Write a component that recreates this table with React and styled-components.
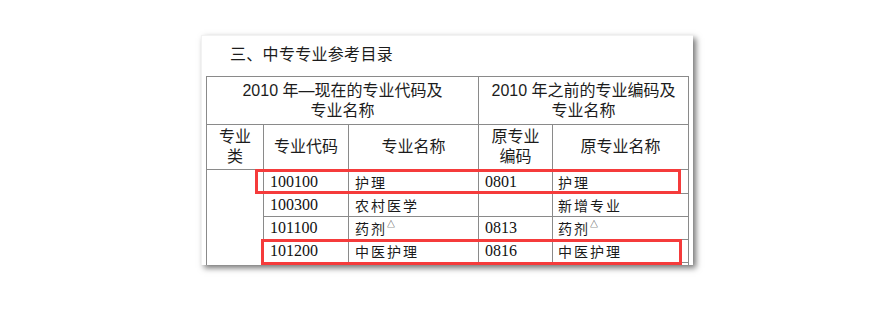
import styled, { createGlobalStyle } from "styled-components";

const GlobalStyle = createGlobalStyle`
  html, body {
    margin: 0;
    padding: 0;
    background: #ffffff;
  }
  body {
    font-family: "Liberation Sans", "Noto Sans CJK SC", sans-serif;
  }
`;

const rows = [
  { code: "100100", name: "护理", oldCode: "0801", oldName: "护理" },
  { code: "100300", name: "农村医学", oldCode: "", oldName: "新增专业" },
  { code: "101100", name: "药剂", mark: true, oldCode: "0813", oldName: "药剂", oldMark: true },
  { code: "101200", name: "中医护理", oldCode: "0816", oldName: "中医护理" },
  // 页面底部被截断的一行
  { code: "", name: "", oldCode: "", oldName: "" },
];

// 红框标注位置（相对于页面）
const highlights = [
  { left: 53, top: 133, width: 426, height: 25 },
  { left: 59, top: 203, width: 421, height: 26 },
];

export default function App() {
  return (
    <>
      <GlobalStyle />
      <Canvas>
        <Page>
          <Title>三、中专专业参考目录</Title>
          <Table>
            <colgroup>
              <col style={{ width: 57 }} />
              <col style={{ width: 85 }} />
              <col style={{ width: 130 }} />
              <col style={{ width: 74 }} />
              <col style={{ width: 136 }} />
            </colgroup>
            <thead>
              <HeadRow $h={48}>
                <HeadCell colSpan={3}>
                  2010 年—现在的专业代码及
                  <br />
                  专业名称
                </HeadCell>
                <HeadCell colSpan={2}>
                  2010 年之前的专业编码及
                  <br />
                  专业名称
                </HeadCell>
              </HeadRow>
              <HeadRow $h={45}>
                <HeadCell>
                  专业
                  <br />类
                </HeadCell>
                <HeadCell>专业代码</HeadCell>
                <HeadCell>专业名称</HeadCell>
                <HeadCell>
                  原专业
                  <br />
                  编码
                </HeadCell>
                <HeadCell>原专业名称</HeadCell>
              </HeadRow>
            </thead>
            <tbody>
              {rows.map((r, i) => (
                <DataRow key={i} $h={i === 0 ? 24 : 23}>
                  {i === 0 && <GroupCell rowSpan={rows.length} />}
                  <NumCell>{r.code}</NumCell>
                  <NameCell>
                    {r.name}
                    {r.mark && <Mark>△</Mark>}
                  </NameCell>
                  <NumCell>{r.oldCode}</NumCell>
                  <NameCell $old>
                    {r.oldName}
                    {r.oldMark && <Mark>△</Mark>}
                  </NameCell>
                </DataRow>
              ))}
            </tbody>
          </Table>
          {highlights.map((b, i) => (
            <Highlight
              key={i}
              style={{ left: b.left, top: b.top, width: b.width, height: b.height }}
            />
          ))}
        </Page>
      </Canvas>
    </>
  );
}

const Canvas = styled.div`
  width: 880px;
  height: 309px;
  padding: 35px 0 0 201px;
  box-sizing: border-box;
`;

const Page = styled.div`
  position: relative;
  width: 492px;
  height: 230px;
  background: #ffffff;
  border-top: 1px solid #f2f2f2;
  border-left: 1px solid #f2f2f2;
  box-sizing: border-box;
  overflow: hidden;
  padding: 40px 0 0 4px;
  box-shadow: 3px 3px 6px rgba(0, 0, 0, 0.55);
`;

const Title = styled.div`
  position: absolute;
  left: 28px;
  top: 6px;
  font-family: "Noto Sans CJK SC", sans-serif;
  font-size: 16px;
  letter-spacing: 0.3px;
  line-height: 22px;
  color: #1c1c1c;
`;

const Table = styled.table`
  border-collapse: collapse;
  table-layout: fixed;
  width: 482px;
  border: 1px solid #8a8a8a;
`;

const HeadRow = styled.tr`
  height: ${(p) => p.$h}px;
`;

const HeadCell = styled.th`
  border: 1px solid #8a8a8a;
  padding: 0;
  font-weight: normal;
  font-family: "Liberation Sans", "Noto Sans CJK SC", sans-serif;
  font-size: 16px;
  line-height: 20px;
  color: #1c1c1c;
  text-align: center;
  vertical-align: middle;
`;

const DataRow = styled.tr`
  height: ${(p) => p.$h}px;
`;

const GroupCell = styled.td`
  border: 1px solid #8a8a8a;
  padding: 0;
`;

const NumCell = styled.td`
  border: 1px solid #8a8a8a;
  padding: 0 0 0 6px;
  font-family: "Liberation Serif", "Noto Sans CJK SC", serif;
  font-size: 16px;
  line-height: 20px;
  color: #111;
  white-space: nowrap;
`;

const NameCell = styled.td`
  border: 1px solid #8a8a8a;
  padding: 0 0 0 ${(p) => (p.$old ? 5 : 6)}px;
  font-family: "Noto Sans CJK SC", sans-serif;
  font-size: 14px;
  letter-spacing: 2px;
  line-height: 20px;
  color: #1a1a1a;
  white-space: nowrap;
`;

const Mark = styled.sup`
  font-size: 8px;
  letter-spacing: 0;
  vertical-align: 7px;
  line-height: 0;
`;

const Highlight = styled.div`
  position: absolute;
  box-sizing: border-box;
  border: 3px solid #f53b3b;
`;
